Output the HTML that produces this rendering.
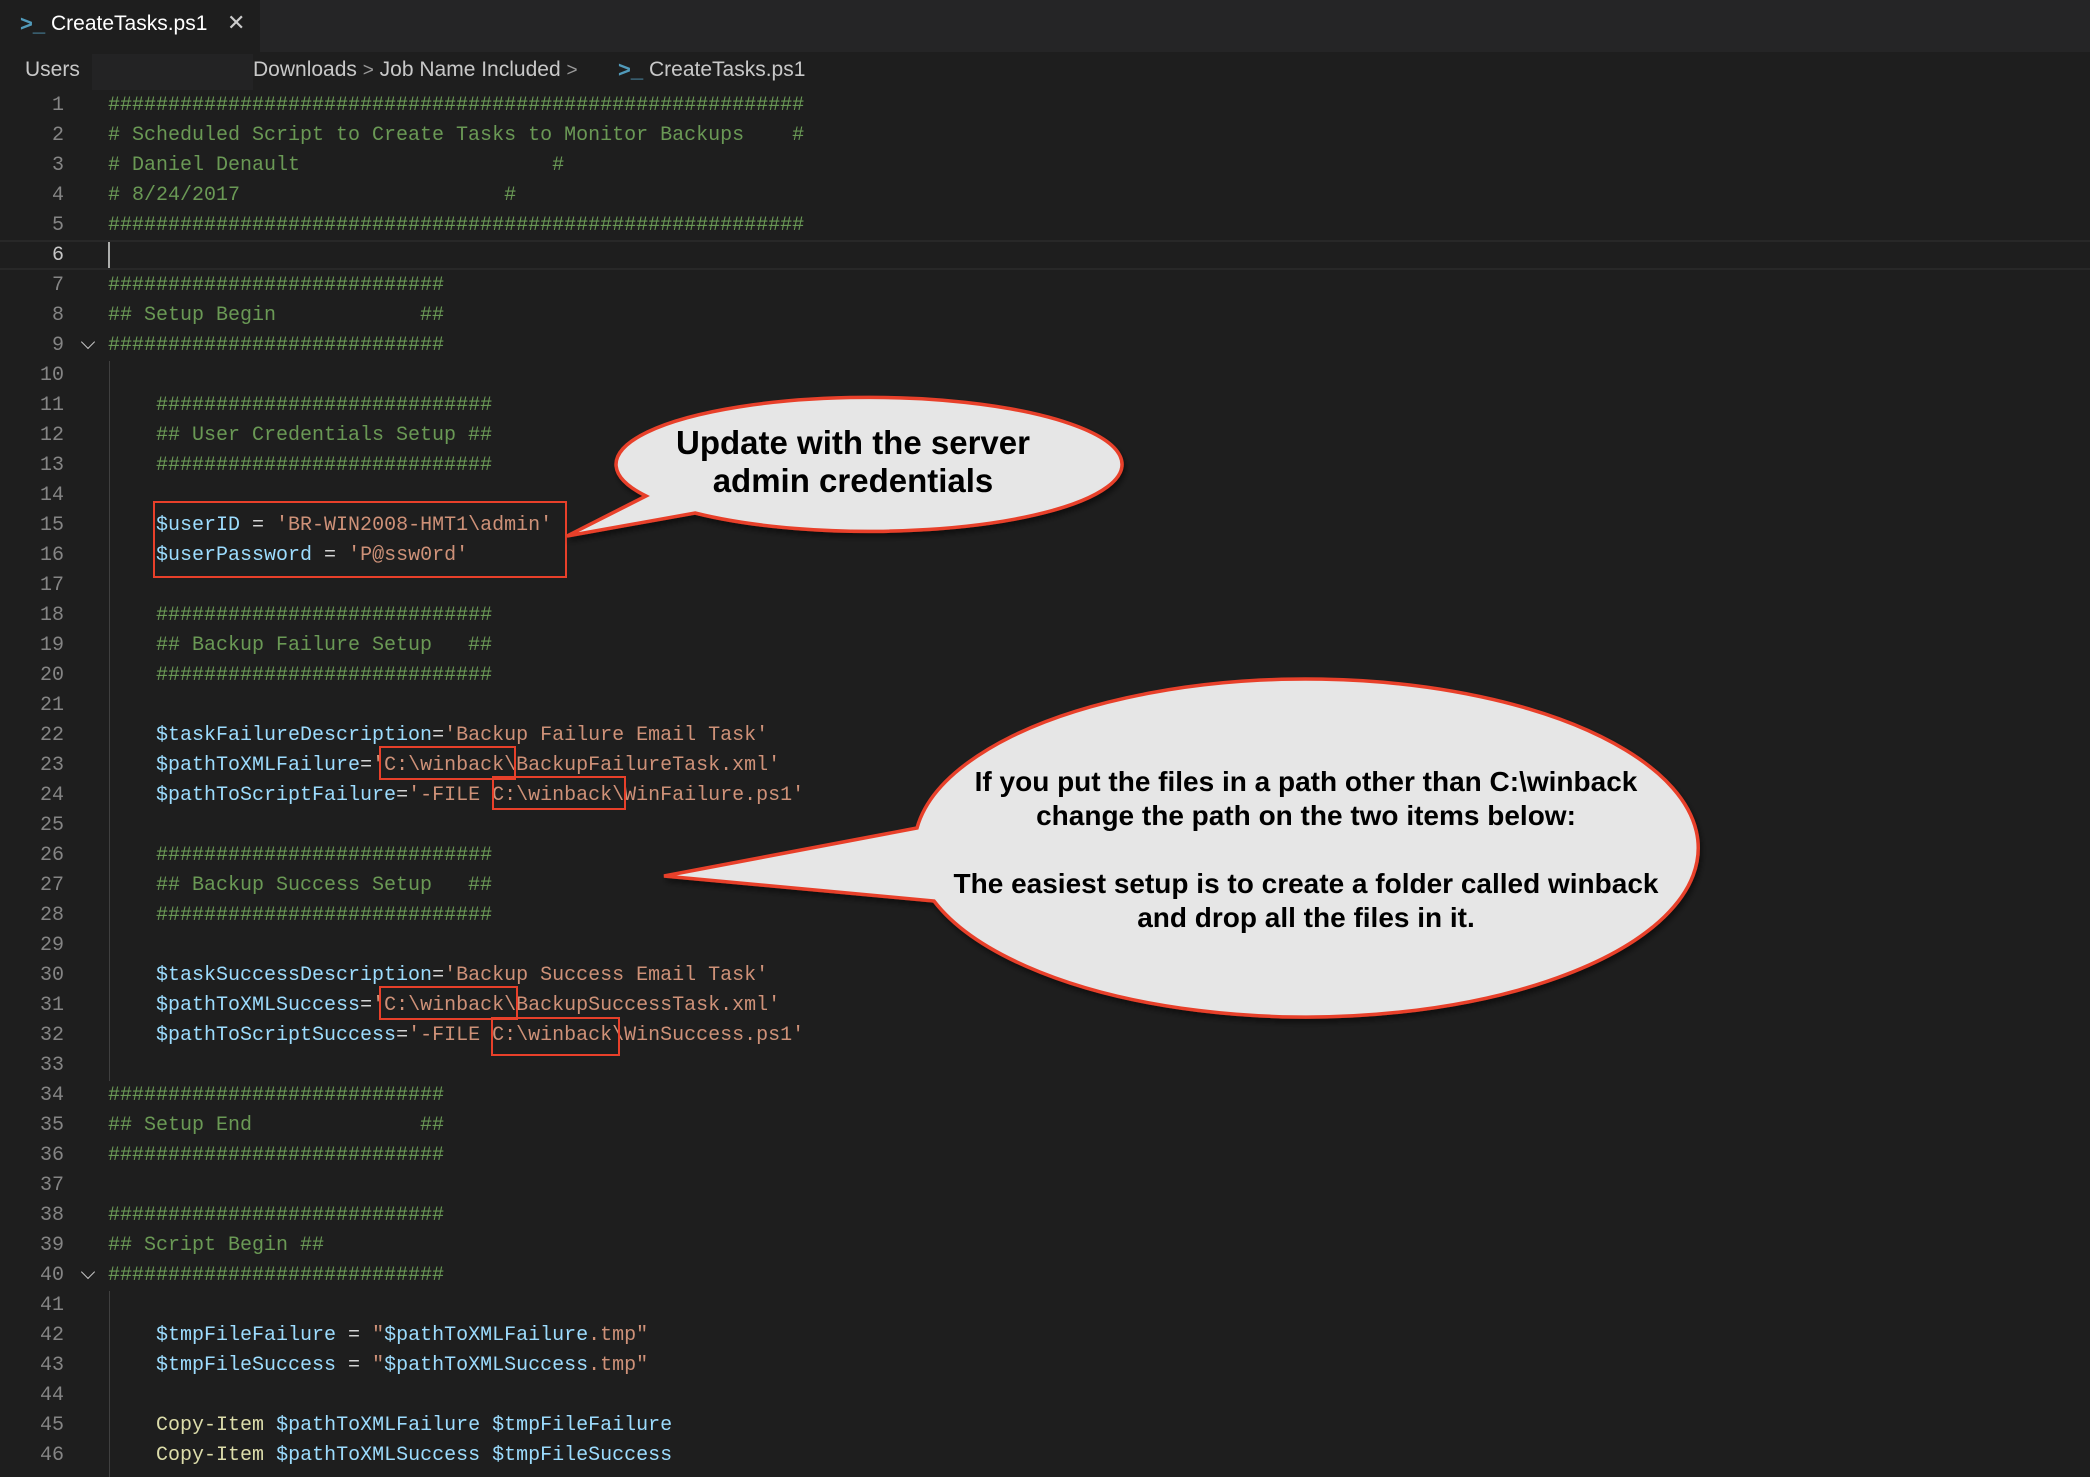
<!DOCTYPE html>
<html><head><meta charset="utf-8">
<style>
html,body{margin:0;padding:0;}
body{width:2090px;height:1474px;background:#1e1e1e;position:relative;overflow:hidden;font-family:"Liberation Sans",sans-serif;}
.tabbar{position:absolute;left:0;top:0;width:2090px;height:52px;background:#252526;}
.tab{position:absolute;left:0;top:0;width:260px;height:52px;background:#1e1e1e;}
.tab .t{position:absolute;left:51px;top:12px;font-size:21px;color:#ffffff;}
.tab .x{position:absolute;left:227px;top:10px;font-size:22px;color:#cccccc;}
.ps{position:absolute;color:#519aba;font-weight:bold;font-size:22px;}
.crumb{position:absolute;top:58px;font-size:21px;color:#c8c8c8;white-space:pre;}
.sep{color:#999;font-size:19px;}
.redact{position:absolute;left:92px;top:54px;width:161px;height:36px;background:#232324;}
.ln{position:absolute;left:0;width:64px;text-align:right;font-family:"Liberation Mono",monospace;font-size:20px;line-height:30px;color:#858585;}
.code{position:absolute;left:108px;font-family:"Liberation Mono",monospace;font-size:20px;line-height:30px;white-space:pre;color:#d4d4d4;}
.c{color:#6a9955}.v{color:#9cdcfe}.s{color:#ce9178}.f{color:#dcdcaa}
.guide{position:absolute;left:109px;width:1px;background:#404040;}
.box{position:absolute;border:2.5px solid #e8402a;box-sizing:border-box;}
.chev{position:absolute;left:83px;width:9px;height:9px;border-right:1.5px solid #c5c5c5;border-bottom:1.5px solid #c5c5c5;transform:rotate(45deg);}
</style></head><body>
<div class="tabbar"><div class="tab"><span class="ps" style="left:20px;top:11px">&gt;_</span><span class="t">CreateTasks.ps1</span><span class="x">✕</span></div></div>
<div class="crumb" style="left:25px">Users</div>
<div class="redact"></div>
<div class="crumb" style="left:253px">Downloads <span class="sep">&gt;</span> Job Name Included <span class="sep">&gt;</span> </div>
<span class="ps" style="left:618px;top:57px">&gt;_</span>
<div class="crumb" style="left:649px">CreateTasks.ps1</div>

<div style="position:absolute;left:0;top:240px;width:2090px;height:30px;border-top:2px solid #282828;border-bottom:2px solid #282828;box-sizing:border-box"></div>
<div style="position:absolute;left:108px;top:242px;width:2px;height:26px;background:#aeafad"></div>

<div class="guide" style="top:361px;height:720px"></div>
<div class="guide" style="top:1291px;height:186px"></div>
<div class="chev" style="top:337px"></div>
<div class="chev" style="top:1267px"></div>

<div class="ln" style="top:91px">1<br>2<br>3<br>4<br>5<br><span style="color:#c6c6c6">6</span><br>7<br>8<br>9<br>10<br>11<br>12<br>13<br>14<br>15<br>16<br>17<br>18<br>19<br>20<br>21<br>22<br>23<br>24<br>25<br>26<br>27<br>28<br>29<br>30<br>31<br>32<br>33<br>34<br>35<br>36<br>37<br>38<br>39<br>40<br>41<br>42<br>43<br>44<br>45<br>46</div>

<div class="code" style="top:91px"><span class="c">##########################################################
# Scheduled Script to Create Tasks to Monitor Backups    #
# Daniel Denault                     #
# 8/24/2017                      #
##########################################################</span>

<span class="c">############################
## Setup Begin            ##
############################</span>

    <span class="c">############################
    ## User Credentials Setup ##
    ############################</span>

    <span class="v">$userID</span> = <span class="s">'BR-WIN2008-HMT1\admin'</span>
    <span class="v">$userPassword</span> = <span class="s">'P@ssw0rd'</span>

    <span class="c">############################
    ## Backup Failure Setup   ##
    ############################</span>

    <span class="v">$taskFailureDescription</span>=<span class="s">'Backup Failure Email Task'</span>
    <span class="v">$pathToXMLFailure</span>=<span class="s">'C:\winback\BackupFailureTask.xml'</span>
    <span class="v">$pathToScriptFailure</span>=<span class="s">'-FILE C:\winback\WinFailure.ps1'</span>

    <span class="c">############################
    ## Backup Success Setup   ##
    ############################</span>

    <span class="v">$taskSuccessDescription</span>=<span class="s">'Backup Success Email Task'</span>
    <span class="v">$pathToXMLSuccess</span>=<span class="s">'C:\winback\BackupSuccessTask.xml'</span>
    <span class="v">$pathToScriptSuccess</span>=<span class="s">'-FILE C:\winback\WinSuccess.ps1'</span>

<span class="c">############################
## Setup End              ##
############################</span>

<span class="c">############################
## Script Begin ##
############################</span>

    <span class="v">$tmpFileFailure</span> = <span class="s">"</span><span class="v">$pathToXMLFailure</span><span class="s">.tmp"</span>
    <span class="v">$tmpFileSuccess</span> = <span class="s">"</span><span class="v">$pathToXMLSuccess</span><span class="s">.tmp"</span>

    <span class="f">Copy-Item</span> <span class="v">$pathToXMLFailure</span> <span class="v">$tmpFileFailure</span>
    <span class="f">Copy-Item</span> <span class="v">$pathToXMLSuccess</span> <span class="v">$tmpFileSuccess</span></div>

<div class="box" style="left:153px;top:501px;width:414px;height:77px"></div>
<div class="box" style="left:379px;top:746px;width:137px;height:34px"></div>
<div class="box" style="left:492px;top:776px;width:134px;height:34px"></div>
<div class="box" style="left:379px;top:986px;width:139px;height:34px"></div>
<div class="box" style="left:491px;top:1017px;width:129px;height:39px"></div>

<svg style="position:absolute;left:0;top:0" width="2090" height="1474" viewBox="0 0 2090 1474">
<defs><filter id="sh" x="-10%" y="-10%" width="120%" height="130%"><feDropShadow dx="2" dy="4" stdDeviation="3" flood-color="#000" flood-opacity="0.5"/></filter></defs>
<path filter="url(#sh)" d="M 646 496 A 253 67 0 1 1 695 513 L 567 536 Z" fill="#e6e6e6" stroke="#e8402a" stroke-width="3.5" stroke-linejoin="miter"/>
<text x="853" y="454" text-anchor="middle" font-family="Liberation Sans Narrow, Liberation Sans, sans-serif" font-weight="bold" font-size="33" fill="#000">Update with the server</text>
<text x="853" y="492" text-anchor="middle" font-family="Liberation Sans Narrow, Liberation Sans, sans-serif" font-weight="bold" font-size="33" fill="#000">admin credentials</text>
<path filter="url(#sh)" d="M 917 828 A 392 169 0 1 1 934 901 L 664 876 Z" fill="#e6e6e6" stroke="#e8402a" stroke-width="3.5"/>
<g font-family="Liberation Sans Narrow, Liberation Sans, sans-serif" font-weight="bold" font-size="28" fill="#000" text-anchor="middle">
<text x="1306" y="791">If you put the files in a path other than C:\winback</text>
<text x="1306" y="825">change the path on the two items below:</text>
<text x="1306" y="893">The easiest setup is to create a folder called winback</text>
<text x="1306" y="927">and drop all the files in it.</text>
</g>
</svg>
</body></html>
